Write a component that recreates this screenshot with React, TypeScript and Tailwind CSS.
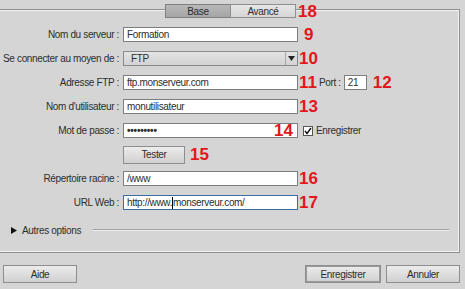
import React from "react";

const RED = "text-[#e3161b] font-bold text-[17px] leading-none tracking-normal";

function Num({ n, className = "" }: { n: string; className?: string }) {
  return <span className={`${RED} ${className}`}>{n}</span>;
}

function Row({ label, children }: { label: string; children: React.ReactNode }) {
  return (
    <div className="flex items-center h-[15px]">
      <span className="w-[119px] text-right whitespace-nowrap">{label}</span>
      <div className="ml-[4px] flex items-center">{children}</div>
    </div>
  );
}

function Field({ value, className = "" }: { value: string; className?: string }) {
  return (
    <div
      className={`w-[175px] h-[15px] bg-white border border-[#7d7d7d] pl-[3px] flex items-center leading-none ${className}`}
    >
      {value}
    </div>
  );
}

function Btn({ label, className = "" }: { label: string; className?: string }) {
  return (
    <div
      className={`h-[18px] flex items-center justify-center bg-gradient-to-b from-[#ececec] to-[#d0d0d0] border border-[#8e8e8e] ${className}`}
    >
      {label}
    </div>
  );
}

export default function App() {
  return (
    <div className="w-[465px] h-[289px] overflow-hidden bg-[#d5d5d5] text-[#2e2e2e] text-[10px] tracking-[-0.35px] font-['Liberation_Sans',Arial,sans-serif] pt-[9px]">
      <div className="w-[460px] h-[244px] border-t border-r border-b border-[#8f8f8f] shadow-[inset_0_1px_0_#f2f2f2,inset_-1px_0_0_#f2f2f2,inset_0_-1px_0_#f2f2f2] flex flex-col">
        <div className="flex items-center -mt-[6px] ml-[165px] h-[14px]">
          <div className="w-[66px] h-[14px] flex items-center justify-center bg-gradient-to-b from-[#b8b8b8] to-[#a6a6a6] border border-[#7f7f7f]">
            Base
          </div>
          <div className="w-[66px] h-[14px] flex items-center justify-center bg-gradient-to-b from-[#e6e6e6] to-[#d6d6d6] border border-[#8f8f8f] -ml-px">
            Avancé
          </div>
          <Num n="18" className="ml-[2px]" />
        </div>

        <div className="flex flex-col gap-[9px] mt-[9px]">
          <Row label="Nom du serveur :">
            <Field value="Formation" />
            <Num n="9" className="ml-[6px]" />
          </Row>
          <Row label="Se connecter au moyen de :">
            <div className="w-[175px] h-[15px] flex items-center bg-gradient-to-b from-[#e4e4e4] to-[#d2d2d2] border border-[#8a8a8a]">
              <span className="pl-[7px] flex-1">FTP</span>
              <span className="w-[12px] h-full border-l border-[#a8a8a8] flex items-center justify-center">
                <svg width="7" height="5" viewBox="0 0 7 5">
                  <path d="M0 0h7L3.5 5z" fill="#222" />
                </svg>
              </span>
            </div>
            <Num n="10" className="ml-[1px]" />
          </Row>
          <Row label="Adresse FTP :">
            <Field value="ftp.monserveur.com" />
            <Num n="11" className="ml-[1px]" />
            <span className="ml-[2px]">Port :</span>
            <div className="ml-[3px] w-[23px] h-[15px] bg-white border border-[#7d7d7d] pl-[3px] flex items-center">21</div>
            <Num n="12" className="ml-[6px]" />
          </Row>
          <Row label="Nom d'utilisateur :">
            <Field value="monutilisateur" />
            <Num n="13" className="ml-[1px]" />
          </Row>
          <Row label="Mot de passe :">
            <div className="relative">
              <Field value="•••••••••" className="font-bold tracking-[-0.2px]" />
              <Num n="14" className="absolute right-[5px] top-[-1px]" />
            </div>
            <span className="ml-[5px] w-[10px] h-[10px] bg-white border border-[#555] flex items-center justify-center">
              <svg width="8" height="8" viewBox="0 0 8 8">
                <path d="M1 4l2 2.5L7 1" stroke="#111" strokeWidth="1.4" fill="none" />
              </svg>
            </span>
            <span className="ml-[3px]">Enregistrer</span>
          </Row>
          <Row label="">
            <Btn label="Tester" className="w-[62px] h-[15px]" />
            <Num n="15" className="ml-[5px]" />
          </Row>
          <Row label="Répertoire racine :">
            <Field value="/www" />
            <Num n="16" className="ml-[1px]" />
          </Row>
          <Row label="URL Web :">
            <div className="w-[175px] h-[15px] bg-white border border-[#3d6d9e] pl-[3px] flex items-center">
              http://www.<span className="w-px h-[12px] bg-black" />monserveur.com/
            </div>
            <Num n="17" className="ml-[1px]" />
          </Row>
        </div>

        <div className="flex items-center mt-[13px] h-[14px] pl-[11px]">
          <svg width="6" height="7" viewBox="0 0 6 7">
            <path d="M0 0l6 3.5L0 7z" fill="#111" />
          </svg>
          <span className="ml-[5px]">Autres options</span>
          <div className="ml-[12px] w-[356px] h-[2px] border-t border-[#a0a0a0] border-b-[#f0f0f0] border-b" />
        </div>
      </div>

      <div className="flex items-center mt-[12px]">
        <Btn label="Aide" className="ml-[3px] w-[74px]" />
        <Btn label="Enregistrer" className="ml-[228px] w-[76px] border-[#5a5a5a] shadow-[inset_0_0_0_1px_#9a9a9a]" />
        <Btn label="Annuler" className="ml-[5px] w-[74px]" />
      </div>
    </div>
  );
}
